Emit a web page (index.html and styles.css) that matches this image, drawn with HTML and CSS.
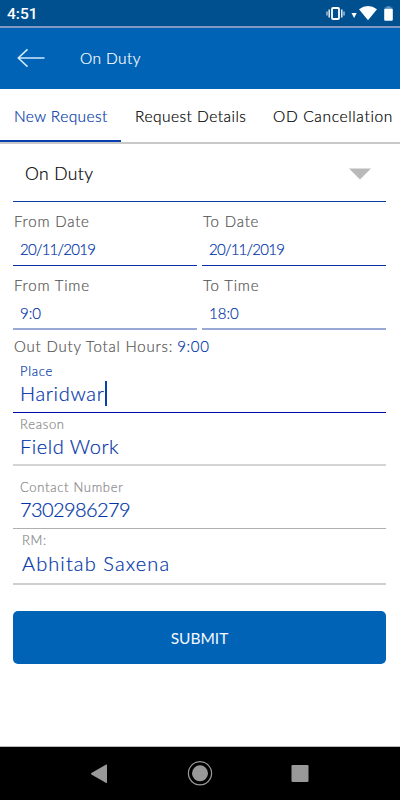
FILE: index.html
```html
<!DOCTYPE html>
<html lang="en">
<head>
<meta charset="utf-8">
<title>On Duty</title>
<link rel="stylesheet" href="styles.css">
</head>
<body>
<div class="status">
  <span class="clock">4:51</span>
  <svg class="status-icons" width="80" height="26" viewBox="0 0 80 26">
    <rect x="12" y="8" width="7" height="11" rx="1" fill="none" stroke="#fff" stroke-width="1.8"/>
    <path d="M9.2 9.5v8M21.8 9.5v8" stroke="#e4eefa" stroke-width="1.5"/>
    <path d="M7 11.5v4M24 11.5v4" stroke="#b9d0e8" stroke-width="1.3"/>
    <path d="M31.5 13h5.200l-2.600 5z" fill="#fff"/>
    <path d="M39 9.200Q48 3 57 9.200L48 20.200z" fill="#fff"/>
    <path d="M64.500 8.800V7.600h2V6.200h4v1.400h2v1.200z" fill="#5c93c3"/>
    <rect x="64.200" y="8.800" width="8.600" height="12" rx="1" fill="#fff"/>
  </svg>
</div>
<header class="bar">
  <svg class="back" width="28" height="20" viewBox="0 0 28 20" fill="none" stroke="#cfe8fa" stroke-width="1.6">
    <path d="M27.500 10H1.500M10.500 1.300L1.300 10L10.500 18.700"/>
  </svg>
  <h1>On Duty</h1>
</header>
<nav class="tabs">
  <a class="tab active">New Request</a>
  <a class="tab details">Request Details</a>
  <a class="tab cancel">OD Cancellation</a>
</nav>
<main class="form">
  <div class="select">
    <span>On Duty</span>
    <svg width="22" height="12" viewBox="0 0 22 12"><path d="M0 .4h22L11 11.600z" fill="#b9b9b9"/></svg>
  </div>
  <div class="pair">
    <div class="field"><label>From Date</label><div class="value date">20/11/2019</div></div>
    <div class="field"><label>To Date</label><div class="value date">20/11/2019</div></div>
  </div>
  <div class="pair times">
    <div class="field"><label>From Time</label><div class="value">9:0</div></div>
    <div class="field"><label>To Time</label><div class="value">18:0</div></div>
  </div>
  <div class="total"><span class="total-label">Out Duty Total Hours:</span><span class="hours">9:00</span></div>
  <div class="input place"><label>Place</label><div class="entry"><span>Haridwar</span><i class="caret"></i></div></div>
  <div class="input reason"><label>Reason</label><div class="entry">Field Work</div></div>
  <div class="input contact"><label>Contact Number</label><div class="entry">7302986279</div></div>
  <div class="input rm"><label>RM:</label><div class="entry">Abhitab Saxena</div></div>
  <button class="submit">SUBMIT</button>
</main>
<footer class="sysnav">
  <svg width="400" height="53" viewBox="0 0 400 53">
    <path d="M107 18v17.500q0 .8-.8.4L91.400 27.500q-.8-.7 0-1.400L106.200 17.500q.8-.4.8.5z" fill="#999"/>
    <circle cx="200" cy="26.300" r="11.600" fill="none" stroke="#999" stroke-width="1.200"/>
    <circle cx="200" cy="26.300" r="8" fill="#999"/>
    <rect x="291.500" y="18" width="17" height="17" rx="1.200" fill="#999"/>
  </svg>
</footer>
</body>
</html>
```

FILE: styles.css
```css
* { box-sizing: border-box; }
body {
  margin: 0;
  width: 400px;
  height: 800px;
  display: flex;
  flex-direction: column;
  overflow: hidden;
  background: #fff;
  font-family: Lato, "Liberation Sans", sans-serif;
  font-weight: 300;
  -webkit-text-stroke: 0.2px currentColor;
}
.status {
  height: 28px;
  display: flex;
  justify-content: space-between;
  background: #00508f;
  border-bottom: 2px solid #8198c3;
}
.clock {
  padding-left: 7px;
  font: 500 15.5px/28px Roboto, sans-serif;
  -webkit-text-stroke: 0;
  color: #fff;
}
.bar {
  height: 61px;
  display: flex;
  align-items: center;
  padding: 0 0 2px 17px;
  background: #0063b6;
}
.back { width: 28px; }
.bar h1 {
  margin: 0 0 0 35px;
  font-size: 15.5px;
  font-weight: 300;
  letter-spacing: 0.4px;
  color: #fff;
}
.tabs {
  height: 55px;
  display: flex;
  border-bottom: 2px solid #c9c9c9;
  white-space: nowrap;
}
.tab {
  height: 53px;
  padding-left: 14px;
  font-size: 15.5px;
  line-height: 54px;
  letter-spacing: 0.65px;
  color: #000;
}
.tab.active {
  width: 121px;
  letter-spacing: 0.4px;
  color: #0038a8;
  border-bottom: 2px solid #0840b0;
}
.details { width: 138px; letter-spacing: 0.48px; }
.form {
  height: 602px;
  padding: 0 14px 0 13px;
}
.select {
  height: 58px;
  display: flex;
  align-items: center;
  justify-content: space-between;
  padding: 2px 15px 0 12px;
  border-bottom: 1px solid #0a3ca8;
  font-size: 17.5px;
  letter-spacing: 0.4px;
  color: #000;
}
.pair {
  display: grid;
  grid-template-columns: 184px 184px;
  column-gap: 5px;
}
.field {
  height: 64px;
  padding-top: 9px;
  border-bottom: 1px solid #0a2ea8;
}
.times .field { border-bottom: 2px solid #9aa8d6; }
.field label, .value {
  display: block;
  height: 20px;
  font-size: 15px;
  line-height: 20px;
}
.field label { padding-left: 1px; letter-spacing: 0.8px; color: #555; }
.value { margin-top: 8px; padding-left: 7px; color: #0034a8; }
.date { letter-spacing: -0.75px; }
.total {
  height: 26px;
  padding: 6px 0 0 1px;
  font-size: 15px;
  line-height: 20px;
  letter-spacing: 0.8px;
  color: #555;
}
.hours { margin-left: 4px; letter-spacing: 0.7px; color: #0034a8; }
.input { padding-left: 7px; }
.input label {
  display: block;
  height: 16px;
  font-size: 13px;
  line-height: 16px;
  letter-spacing: 0.7px;
  color: #888;
}
.entry {
  display: flex;
  height: 25px;
  margin-top: 2px;
  font-size: 20px;
  line-height: 25px;
  letter-spacing: 0.55px;
  color: #0034a8;
}
.place { height: 57px; padding-top: 7px; border-bottom: 1px solid #0008a8; }
.input.place label { color: #0038a8; }
.place .entry { letter-spacing: 0.7px; }
.caret { width: 2px; height: 25px; background: #0840ac; }
.reason { height: 53px; padding-top: 3px; border-bottom: 2px solid #d5d5d5; }
.contact { height: 63px; padding-top: 13px; border-bottom: 1px solid #b0b0b0; }
.contact .entry { letter-spacing: -0.6px; }
.rm { height: 56px; padding: 3px 0 0 9px; border-bottom: 2px solid #cfcfcf; }
.rm .entry { margin-top: 3px; letter-spacing: 1.1px; }
.submit {
  display: block;
  width: 373px;
  height: 53px;
  margin-top: 26px;
  padding: 0;
  border: 0;
  border-radius: 5px;
  background: #0063b6;
  color: #f4f8ff;
  font: 400 15.5px Lato, sans-serif;
  -webkit-text-stroke: 0;
}
.sysnav {
  height: 54px;
  border-top: 1px solid #bbb;
  background: #000;
}
.sysnav svg { display: block; }
```
